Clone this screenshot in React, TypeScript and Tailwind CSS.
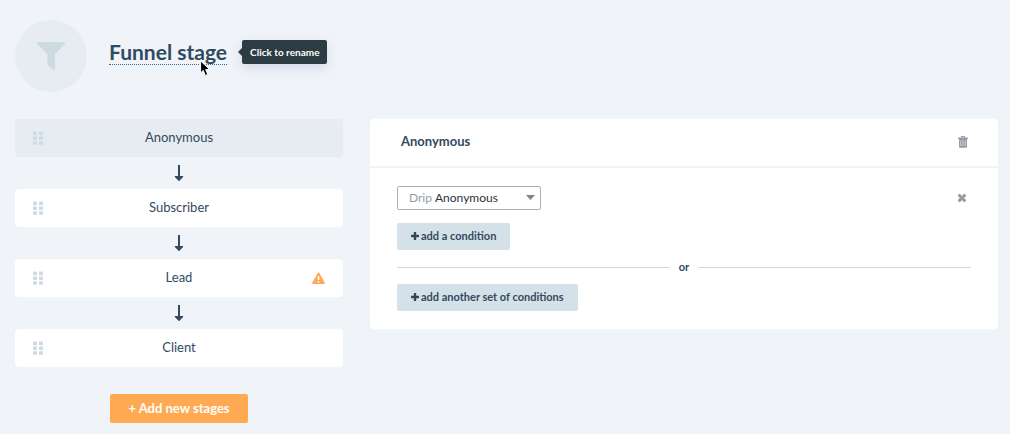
import { useState } from "react";

type Stage = { name: string; warning?: boolean };

const stages: Stage[] = [
  { name: "Anonymous" },
  { name: "Subscriber" },
  { name: "Lead", warning: true },
  { name: "Client" },
];

function FunnelIcon() {
  return (
    <svg width="30" height="30" viewBox="0 0 30 30" fill="#cddbe1" aria-hidden="true">
      <path d="M2 1h26c1.200 0 1.600 1.200.8 2L19 13.200V28c0 1.200-.8 1.600-1.600.9l-5.400-4.600c-.4-.4-.6-.8-.6-1.300V13.200L1.200 3C.4 2.200.8 1 2 1z" />
    </svg>
  );
}

function GripIcon() {
  return (
    <svg width="10" height="14" viewBox="0 0 10 14" fill="#cddbe2" aria-hidden="true">
      {[0.6, 5.4, 10.2].map((y) => (
        <g key={y}>
          <rect x="0" y={y} width="4" height="3.600" rx=".7" />
          <rect x="6" y={y} width="4" height="3.600" rx=".7" />
        </g>
      ))}
    </svg>
  );
}

function ArrowDown() {
  return (
    <svg width="10" height="16" viewBox="0 0 10 16" fill="#34495e" aria-hidden="true">
      <path d="M4 0h2v11h2.700c.5 0 .7.500.4.900L5.500 15.700c-.3.300-.7.300-1 0L.9 11.900C.6 11.500.8 11 1.300 11H4z" />
    </svg>
  );
}

function WarningIcon() {
  return (
    <svg width="13" height="13" viewBox="0 0 14 13" role="img" aria-label="Warning">
      <path
        fill="#ffa953"
        fillRule="evenodd"
        d="M6.200.600c.4-.7 1.300-.7 1.700 0l5.800 10.500c.3.700 0 1.400-.8 1.400H1.100c-.8 0-1.200-.7-.8-1.400zM6 4.200l.3 4h1.500l.3-4zM6.100 9.100v1.700h1.800V9.100z"
      />
    </svg>
  );
}

function TrashIcon() {
  return (
    <svg width="10" height="12" viewBox="0 0 10 12" fill="#949da3" aria-hidden="true">
      <path
        fillRule="evenodd"
        d="M3 1.500V1c0-.6.4-1 1-1h2c.6 0 1 .4 1 1v.5h2.500c.3 0 .5.200.5.500v1H0V2c0-.3.200-.5.500-.5zM4 1v.5h2V1zM1 3h8v7.500c0 .8-.5 1.300-1.300 1.300H2.300c-.8 0-1.300-.5-1.300-1.300z"
      />
      <path d="M2.500 4.500V10M4.200 4.500V10M5.800 4.500V10M7.500 4.500V10" stroke="#d5d9dc" strokeWidth=".7" />
    </svg>
  );
}

function CloseIcon() {
  return (
    <svg width="10" height="10" viewBox="0 0 10 10" fill="none" stroke="#949da3" strokeWidth="3" strokeLinecap="square" strokeLinejoin="round" aria-hidden="true">
      <path d="M2.700 2.700l4.600 4.600M7.300 2.700L2.700 7.300" />
    </svg>
  );
}

function PlusIcon() {
  return (
    <svg width="8" height="8" viewBox="0 0 8 8" fill="#2f4858" aria-hidden="true">
      <path d="M2.800.500c0-.3.200-.5.500-.5h1.400c.3 0 .5.200.5.500v2.300h2.300c.3 0 .5.200.5.500v1.400c0 .3-.2.500-.5.500H5.200v2.300c0 .3-.2.500-.5.500H3.300c-.3 0-.5-.2-.5-.5V5.200H.5C.2 5.200 0 5 0 4.700V3.300c0-.3.200-.5.500-.5h2.300z" />
    </svg>
  );
}

function PointerIcon() {
  return (
    <svg width="11" height="17" viewBox="0 0 11 17" aria-hidden="true">
      <path d="M.6.9v12l2.700-2.500 2 5 2.500-1-2.100-4.800h4z" fill="#000" stroke="#fff" strokeWidth="1" />
    </svg>
  );
}

function ConditionButton({ children }: { children: string }) {
  return (
    <button type="button" className="flex h-[27px] items-center gap-0.5 rounded-xs bg-[#d5e1e8] px-3.5 pb-px text-[11px] font-bold text-[#34495e]">
      <PlusIcon />
      {children}
    </button>
  );
}

export default function App() {
  const [selected, setSelected] = useState("Anonymous");

  return (
    <main className="min-h-screen bg-[#f0f3f8] pt-5 pr-3 pl-[15px] font-[Lato,'Open_Sans',sans-serif] text-[#34495e]">
      <header className="flex items-start gap-[22px]">
        <div className="flex size-[72px] items-center justify-center rounded-full bg-[#e7ecf3]">
          <FunnelIcon />
        </div>
        <h1 className="relative mt-5">
          <button
            type="button"
            aria-describedby="rename-tip"
            className="block border-b border-dotted border-[#34688a] text-[21px] leading-6 font-bold text-[#2f4b60]"
          >
            Funnel stage
          </button>
          <span
            id="rename-tip"
            role="tooltip"
            className="absolute top-0 left-full ml-[15px] flex h-6 items-center rounded-xs bg-[#2d3b42] px-2 text-[10px] font-bold whitespace-nowrap text-white shadow-[0_4px_12px_#d3dae7]"
          >
            <svg className="absolute top-2 -left-1" width="4" height="8" viewBox="0 0 4 8" fill="#2d3b42" aria-hidden="true">
              <path d="M4 0v8L0 4z" />
            </svg>
            Click to rename
          </span>
          <span className="absolute top-5 right-4">
            <PointerIcon />
          </span>
        </h1>
      </header>

      <div className="mt-[27px] flex items-start gap-[27px]">
        <section aria-label="Stages" className="flex w-82 shrink-0 flex-col items-center">
          <ol className="w-full">
            {stages.map((stage, i) => (
              <li key={stage.name}>
                {i > 0 && (
                  <div className="flex h-8 items-center justify-center">
                    <ArrowDown />
                  </div>
                )}
                <button
                  type="button"
                  onClick={() => setSelected(stage.name)}
                  className={`grid h-[38px] w-full grid-cols-[1fr_auto_1fr] items-center rounded px-[18px] text-[13px] ${
                    stage.name === selected ? "bg-[#e7ecf3]" : "bg-white"
                  }`}
                >
                  <GripIcon />
                  <span>{stage.name}</span>
                  <span className="justify-self-end">{stage.warning && <WarningIcon />}</span>
                </button>
              </li>
            ))}
          </ol>
          <button type="button" className="mt-[27px] h-[29px] rounded-xs bg-[#ffa953] px-[18px] text-[13px] font-bold text-white">
            + Add new stages
          </button>
        </section>

        <section aria-labelledby="stage-title" className="min-w-0 flex-1 overflow-hidden rounded bg-white">
          <header className="flex h-[49px] items-center justify-between border-b-2 border-[#f0f3f8] pr-[30px] pb-0.5 pl-[31px]">
            <h2 id="stage-title" className="text-[13px] font-bold">
              {selected}
            </h2>
            <button type="button" aria-label="Delete stage">
              <TrashIcon />
            </button>
          </header>
          <div className="flex flex-col items-start px-[27px] pt-[18px] pb-[18px]">
            <div className="flex w-full items-center justify-between pr-1">
              <div className="relative flex h-6 w-36 items-center rounded-xs border border-[#adb1b1] pl-[11px] text-[12px]">
                <label htmlFor="drip" className="text-[#949da3]">
                  Drip
                </label>
                <select id="drip" defaultValue="Anonymous" className="h-full min-w-0 flex-1 appearance-none pl-[3px] text-[#2b333b]">
                  {stages.map((stage) => (
                    <option key={stage.name}>{stage.name}</option>
                  ))}
                </select>
                <svg className="pointer-events-none absolute top-2 right-[5px]" width="9" height="5" viewBox="0 0 9 5" fill="#7f8484" aria-hidden="true">
                  <path d="M0 0h9L4.500 5z" />
                </svg>
              </div>
              <button type="button" aria-label="Remove condition">
                <CloseIcon />
              </button>
            </div>
            <div className="mt-[13px]">
              <ConditionButton>add a condition</ConditionButton>
            </div>
            <div className="my-2.5 flex w-full items-center gap-[9px] text-[11px] leading-[14px] font-bold">
              <span className="h-px flex-1 bg-[#cddbe1]" />
              or
              <span className="h-px flex-1 bg-[#cddbe1]" />
            </div>
            <ConditionButton>add another set of conditions</ConditionButton>
          </div>
        </section>
      </div>
    </main>
  );
}
